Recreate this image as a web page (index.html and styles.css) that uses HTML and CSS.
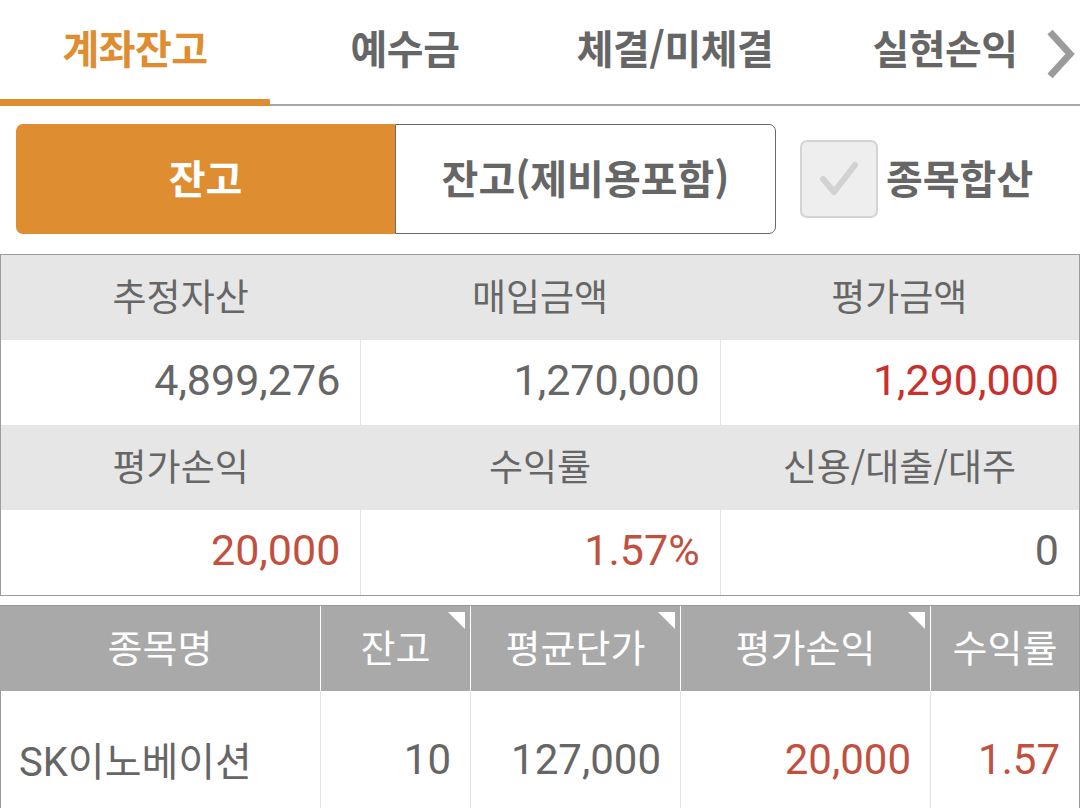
FILE: index.html
```html
<!DOCTYPE html>
<html lang="ko">
<head>
<meta charset="utf-8">
<title>계좌잔고</title>
<link rel="stylesheet" href="styles.css">
</head>
<body>
<div class="app">
  <nav class="tabs">
    <div class="tab active">계좌잔고</div>
    <div class="tab">예수금</div>
    <div class="tab">체결/미체결</div>
    <div class="tab">실현손익</div>
    <svg class="more" width="32" height="52" viewBox="0 0 32 52"><polyline points="6,4 26,26 6,48" fill="none" stroke="#9b9b9b" stroke-width="7"/></svg>
  </nav>

  <div class="controls">
    <div class="seg">
      <div class="seg-btn on">잔고</div>
      <div class="seg-btn off">잔고(제비용포함)</div>
    </div>
    <div class="chk">
      <span class="box"><svg width="44" height="44" viewBox="0 0 44 44"><polyline points="6,22 17,35 38,8" fill="none" stroke="#d2d2d2" stroke-width="6" stroke-linecap="round" stroke-linejoin="round"/></svg></span>
      <span class="chk-label">종목합산</span>
    </div>
  </div>

  <div class="summary">
    <div class="sh">추정자산</div>
    <div class="sh">매입금액</div>
    <div class="sh">평가금액</div>
    <div class="sv">4,899,276</div>
    <div class="sv">1,270,000</div>
    <div class="sv red">1,290,000</div>
    <div class="sh">평가손익</div>
    <div class="sh">수익률</div>
    <div class="sh">신용/대출/대주</div>
    <div class="sv brick">20,000</div>
    <div class="sv brick">1.57%</div>
    <div class="sv">0</div>
  </div>

  <div class="stocks">
    <div class="th">종목명</div>
    <div class="th sort">잔고</div>
    <div class="th sort">평균단가</div>
    <div class="th sort">평가손익</div>
    <div class="th">수익률</div>
    <div class="td name">SK이노베이션</div>
    <div class="td">10</div>
    <div class="td">127,000</div>
    <div class="td brick">20,000</div>
    <div class="td brick">1.57</div>
  </div>
</div>
</body>
</html>
```

FILE: styles.css
```css
* { box-sizing: border-box; }
html, body { margin: 0; padding: 0; background: #fff; }
body {
  font-family: "Roboto", "Noto Sans CJK KR", sans-serif;
  color: #666;
  width: 1080px;
  height: 808px;
  overflow: hidden;
}

.tabs {
  position: relative;
  display: flex;
  height: 106px;
  border-bottom: 2px solid #a8a8a8;
}
.tab {
  position: relative;
  width: 270px;
  display: flex;
  align-items: center;
  justify-content: center;
  padding-bottom: 10px;
  font-family: "Noto Sans CJK KR", sans-serif;
  font-weight: 700;
  font-size: 40px;
  color: #666;
  letter-spacing: -0.5px;
}
.tab.active { color: #de8d30; }
.tab.active::after {
  content: "";
  position: absolute;
  left: 0;
  right: 0;
  bottom: -2px;
  height: 7px;
  background: #de8d30;
}
.more {
  position: absolute;
  right: 4px;
  top: 28px;
}

.controls {
  display: flex;
  align-items: center;
  margin-top: 18px;
  padding-left: 16px;
  height: 110px;
}
.seg {
  display: flex;
  width: 760px;
  height: 110px;
}
.seg-btn {
  flex: 1;
  display: flex;
  align-items: center;
  justify-content: center;
  font-family: "Noto Sans CJK KR", sans-serif;
  font-weight: 700;
  font-size: 40px;
  padding-bottom: 4px;
}
.seg-btn.on {
  background: #de8d30;
  color: #fff;
  border-radius: 7px 0 0 7px;
}
.seg-btn.off {
  color: #666;
  border: 1px solid #6a6a6a;
  border-radius: 0 7px 7px 0;
}
.chk {
  display: flex;
  align-items: center;
  margin-left: 24px;
}
.box {
  width: 78px;
  height: 78px;
  border: 2px solid #d4d4d4;
  border-radius: 7px;
  background: #eeeeee;
  display: flex;
  align-items: center;
  justify-content: center;
}
.chk-label {
  margin-left: 8px;
  font-family: "Noto Sans CJK KR", sans-serif;
  font-weight: 700;
  font-size: 40px;
  color: #666;
  padding-bottom: 4px;
}

.summary {
  margin-top: 20px;
  display: grid;
  grid-template-columns: 1fr 1fr 1fr;
  grid-auto-rows: 85px;
  border: 1px solid #9c9c9c;
}
.sh {
  background: #e6e6e6;
  display: flex;
  align-items: center;
  justify-content: center;
  font-family: "Noto Sans CJK KR", sans-serif;
  font-size: 37px;
  color: #666;
  padding-bottom: 6px;
}
.sv {
  display: flex;
  align-items: center;
  justify-content: flex-end;
  padding-right: 20px;
  padding-bottom: 5px;
  font-size: 43px;
  color: #666;
  background: #fff;
}
.sv + .sv { border-left: 1px solid #e2e2e2; }
.red { color: #c8302e !important; }
.brick { color: #c1503f !important; }

.stocks {
  margin-top: 9px;
  display: grid;
  grid-template-columns: 320px 150px 210px 250px 1fr;
  grid-template-rows: 85px 136px;
  border-top: 1px solid #999;
  border-right: 1px solid #999;
}
.th {
  position: relative;
  background: #a9a9a9;
  color: #fff;
  display: flex;
  align-items: center;
  justify-content: center;
  font-family: "Noto Sans CJK KR", sans-serif;
  font-size: 38px;
  padding-bottom: 7px;
}
.th + .th { border-left: 1px solid #fff; }
.th.sort::after {
  content: "";
  position: absolute;
  top: 6px;
  right: 5px;
  width: 17px;
  height: 17px;
  background: #fff;
  clip-path: polygon(0 0, 100% 0, 100% 100%);
}
.td {
  display: flex;
  align-items: center;
  justify-content: flex-end;
  padding-right: 19px;
  font-size: 42px;
  color: #666;
  border-left: 1px solid #e2e2e2;
}
.td.name {
  justify-content: flex-start;
  padding-left: 18px;
  font-size: 40px;
  border-left: 1px solid #999;
}
```
